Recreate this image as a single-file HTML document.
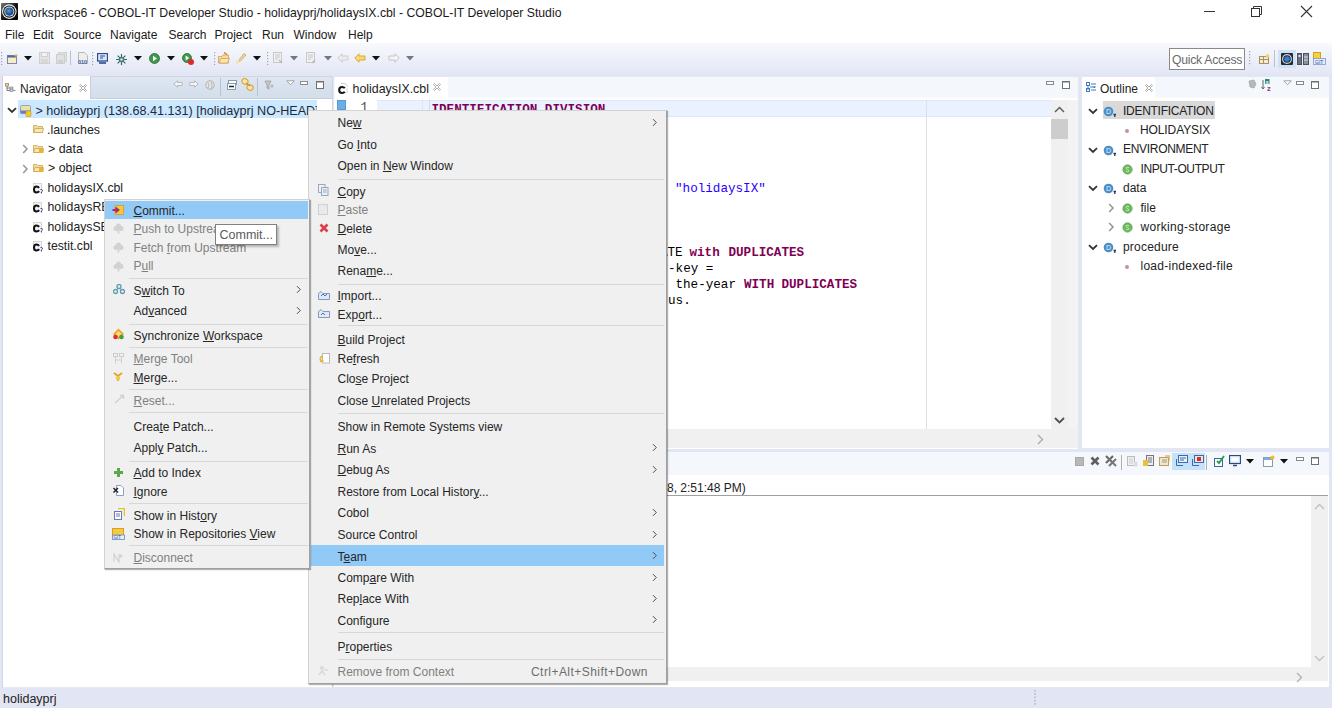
<!DOCTYPE html><html><head><meta charset="utf-8"><style>
html,body{margin:0;padding:0;width:1332px;height:708px;overflow:hidden;background:#e2e5f3}
body>div,body>svg{position:absolute}
.t{white-space:pre;line-height:1}
u{text-decoration:underline;text-underline-offset:1px;text-decoration-thickness:1px}
</style></head><body>
<div style="left:0px;top:0px;width:1332px;height:24px;background:#fff"></div>
<svg style="left:1px;top:3px" width="17" height="17" viewBox="0 0 17 17"><defs><radialGradient id="ag" cx="0.45" cy="0.4" r="0.6"><stop offset="0" stop-color="#5a9ad8"/><stop offset="1" stop-color="#0e3a6e"/></radialGradient><linearGradient id="bg0" x1="0" y1="0" x2="1" y2="1"><stop offset="0" stop-color="#7a7a7a"/><stop offset="0.5" stop-color="#151515"/><stop offset="1" stop-color="#000"/></linearGradient></defs><rect x="0" y="0" width="17" height="17" rx="0.8" fill="url(#bg0)"/><circle cx="8.3" cy="8.6" r="7.3" fill="#f0f0f0"/><circle cx="8.3" cy="8.6" r="6.2" fill="#1a1a1a"/><circle cx="8.3" cy="8.6" r="5" fill="#cfe4f5"/><circle cx="8.3" cy="8.6" r="4.1" fill="url(#ag)"/></svg>
<div class="t" style="left:22px;top:6.63px;font-size:12.25px;color:#1a1a1a;font-family:'Liberation Sans',sans-serif;">workspace6 - COBOL-IT Developer Studio - holidayprj/holidaysIX.cbl - COBOL-IT Developer Studio</div>
<div style="left:1204px;top:11px;width:11px;height:1px;background:#333"></div>
<svg style="left:1250px;top:5px" width="14" height="13"><rect x="1.5" y="3.5" width="8" height="8" fill="#fff" stroke="#333"/><path d="M3.5 3.5V1.5H11.5V9.5H9.5" fill="none" stroke="#333"/></svg>
<svg style="left:1300px;top:5px" width="13" height="13"><path d="M1 1L12 12M12 1L1 12" stroke="#333" stroke-width="1.1"/></svg>
<div style="left:0px;top:24px;width:1332px;height:20px;background:#fff"></div>
<div class="t" style="left:5px;top:28.84px;font-size:12px;color:#1a1a1a;font-family:'Liberation Sans',sans-serif;">File</div>
<div class="t" style="left:33px;top:28.84px;font-size:12px;color:#1a1a1a;font-family:'Liberation Sans',sans-serif;">Edit</div>
<div class="t" style="left:63.5px;top:28.84px;font-size:12px;color:#1a1a1a;font-family:'Liberation Sans',sans-serif;">Source</div>
<div class="t" style="left:110px;top:28.84px;font-size:12px;color:#1a1a1a;font-family:'Liberation Sans',sans-serif;">Navigate</div>
<div class="t" style="left:168.5px;top:28.84px;font-size:12px;color:#1a1a1a;font-family:'Liberation Sans',sans-serif;">Search</div>
<div class="t" style="left:214.5px;top:28.84px;font-size:12px;color:#1a1a1a;font-family:'Liberation Sans',sans-serif;">Project</div>
<div class="t" style="left:262px;top:28.84px;font-size:12px;color:#1a1a1a;font-family:'Liberation Sans',sans-serif;">Run</div>
<div class="t" style="left:293.5px;top:28.84px;font-size:12px;color:#1a1a1a;font-family:'Liberation Sans',sans-serif;">Window</div>
<div class="t" style="left:348px;top:28.84px;font-size:12px;color:#1a1a1a;font-family:'Liberation Sans',sans-serif;">Help</div>
<div style="left:0px;top:43px;width:1332px;height:31px;background:linear-gradient(#f8f9fd,#e3e7f5)"></div>
<div style="left:0px;top:74px;width:1332px;height:634px;background:#e2e5f3"></div>
<div style="left:2px;top:76px;width:331px;height:612px;background:#fff;border:1px solid #d2d4de;border-bottom-color:#e8eaf2;box-sizing:border-box"></div>
<div style="left:3px;top:77px;width:329px;height:21px;background:linear-gradient(#dde6f1,#d3deeb)"></div>
<div style="left:3px;top:98px;width:329px;height:1px;background:#c5d0de"></div>
<div style="left:3px;top:76px;width:88px;height:23px;background:#fff;border-right:1px solid #c9cfdb;box-sizing:border-box"></div>
<div class="t" style="left:20px;top:82.84px;font-size:12px;color:#222;font-family:'Liberation Sans',sans-serif;">Navigator</div>
<div style="left:333px;top:76px;width:746px;height:374px;background:#fff;border:1px solid #e4e7f0;box-sizing:border-box"></div>
<div style="left:334px;top:77px;width:744px;height:21px;background:#f4f7fc"></div>
<div style="left:335px;top:77px;width:113px;height:22px;background:#fff"></div>
<div class="t" style="left:352.5px;top:82.70px;font-size:12.4px;color:#222;font-family:'Liberation Sans',sans-serif;">holidaysIX.cbl</div>
<div style="left:1081px;top:76px;width:249px;height:373px;background:#fff;border:1px solid #e4e7f0;box-sizing:border-box"></div>
<div style="left:1082px;top:77px;width:247px;height:21px;background:#f4f7fc"></div>
<div style="left:1082px;top:77px;width:73px;height:22px;background:#fff"></div>
<div class="t" style="left:1100px;top:83.34px;font-size:12px;color:#222;font-family:'Liberation Sans',sans-serif;">Outline</div>
<div style="left:333px;top:451.5px;width:997px;height:236px;background:#fff;border:1px solid #e4e7f0;box-sizing:border-box"></div>
<div style="left:334px;top:452px;width:995px;height:23px;background:#f4f7fc"></div>
<div style="left:334px;top:495px;width:994px;height:1px;background:#a0a0a0"></div>
<div class="t" style="left:667px;top:481.64px;font-size:12px;color:#222;font-family:'Liberation Sans',sans-serif;">8, 2:51:48 PM)</div>
<div class="t" style="left:3px;top:692.72px;font-size:12.5px;color:#222;font-family:'Liberation Sans',sans-serif;">holidayprj</div>
<div style="left:18px;top:100.3px;width:299px;height:18px;background:#cce8ff"></div>
<svg style="left:7px;top:107px" width="10" height="7"><path d="M1 1.2L5 5L9 1.2" fill="none" stroke="#333" stroke-width="1.8"/></svg>
<div style="left:0;top:100px;width:317px;height:20px;overflow:hidden">
<div class="t" style="left:35.5px;top:4.53px;font-size:12.6px;color:#1d2a3a;font-family:'Liberation Sans',sans-serif;position:absolute">&gt; holidayprj (138.68.41.131) [holidayprj NO-HEAD]</div>
</div>
<div class="t" style="left:47px;top:123.50px;font-size:12.4px;color:#222;font-family:'Liberation Sans',sans-serif;">.launches</div>
<svg style="left:22px;top:144px" width="7" height="10"><path d="M1.2 1L5 5L1.2 9" fill="none" stroke="#999" stroke-width="1.6"/></svg>
<div class="t" style="left:48px;top:143.00px;font-size:12.4px;color:#222;font-family:'Liberation Sans',sans-serif;">&gt; data</div>
<svg style="left:22px;top:163.5px" width="7" height="10"><path d="M1.2 1L5 5L1.2 9" fill="none" stroke="#999" stroke-width="1.6"/></svg>
<div class="t" style="left:48px;top:162.10px;font-size:12.4px;color:#222;font-family:'Liberation Sans',sans-serif;">&gt; object</div>
<div class="t" style="left:47.5px;top:181.53px;font-size:12.25px;color:#222;font-family:'Liberation Sans',sans-serif;">holidaysIX.cbl</div>
<div class="t" style="left:47.5px;top:201.23px;font-size:12.25px;color:#222;font-family:'Liberation Sans',sans-serif;">holidaysREL.cbl</div>
<div class="t" style="left:47.5px;top:220.63px;font-size:12.25px;color:#222;font-family:'Liberation Sans',sans-serif;">holidaysSEQ.cbl</div>
<div class="t" style="left:47.5px;top:240.23px;font-size:12.25px;color:#222;font-family:'Liberation Sans',sans-serif;">testit.cbl</div>
<div style="left:377px;top:100px;width:674px;height:17px;background:#e9f2fe;border-top:1px solid #dfe8fa;border-bottom:1px solid #dfe8fa;box-sizing:border-box"></div>
<div style="left:422px;top:99px;width:1px;height:12px;background:#dfe6ef"></div>
<div style="left:429px;top:99px;width:1px;height:12px;background:#d5dde8"></div>
<div style="left:337px;top:100px;width:9px;height:10px;background:#6aaee8;box-shadow:inset 0 0 0 1px #5a9ad0"></div>
<div class="t" style="left:360.5px;top:102.24px;font-size:12.6px;color:#4a4a4a;font-family:'Liberation Mono',monospace;">1</div>
<div style="left:926px;top:100px;width:1px;height:329px;background:#e0e0e0"></div>
<div style="left:1051px;top:100px;width:27px;height:329px;background:#f3f3f3"></div>
<div style="left:1051px;top:100px;width:17px;height:329px;background:#f0f0f0"></div>
<div style="left:1051px;top:119px;width:17px;height:20px;background:#cdcdcd"></div>
<svg style="left:1054px;top:106px" width="11" height="7"><path d="M1 6L5.5 1.5L10 6" fill="none" stroke="#606060" stroke-width="1.5"/></svg>
<svg style="left:1054px;top:417px" width="11" height="7"><path d="M1 1L5.5 5.5L10 1" fill="none" stroke="#505050" stroke-width="1.8"/></svg>
<div style="left:334px;top:429px;width:744px;height:19px;background:#f0f0f0"></div>
<svg style="left:1037px;top:434px" width="7" height="11"><path d="M1 1L5.5 5.5L1 10" fill="none" stroke="#a8a8a8" stroke-width="1.3"/></svg>
<div class="t" style="left:431.5px;top:104.24px;font-size:12.6px;color:#7f0055;font-family:'Liberation Mono',monospace;font-weight:bold;">IDENTIFICATION DIVISION</div>
<div class="t" style="left:667.5px;top:183.24px;font-size:12.6px;color:#2a00ff;font-family:'Liberation Mono',monospace;">&nbsp;"holidaysIX"</div>
<div class="t" style="left:660px;top:247.24px;font-size:12.6px;color:#000;font-family:'Liberation Mono',monospace;">ATE </div>
<div class="t" style="left:689.5px;top:247.24px;font-size:12.6px;color:#7f0055;font-family:'Liberation Mono',monospace;font-weight:bold;">with</div>
<div class="t" style="left:728.5px;top:247.24px;font-size:12.6px;color:#7f0055;font-family:'Liberation Mono',monospace;font-weight:bold;">DUPLICATES</div>
<div class="t" style="left:660.5px;top:263.24px;font-size:12.6px;color:#000;font-family:'Liberation Mono',monospace;">r-key =</div>
<div class="t" style="left:675.5px;top:279.24px;font-size:12.6px;color:#000;font-family:'Liberation Mono',monospace;">the-year</div>
<div class="t" style="left:744px;top:279.24px;font-size:12.6px;color:#7f0055;font-family:'Liberation Mono',monospace;font-weight:bold;">WITH</div>
<div class="t" style="left:781.5px;top:279.24px;font-size:12.6px;color:#7f0055;font-family:'Liberation Mono',monospace;font-weight:bold;">DUPLICATES</div>
<div class="t" style="left:660.5px;top:295.24px;font-size:12.6px;color:#000;font-family:'Liberation Mono',monospace;">tus.</div>
<div style="left:1103px;top:101px;width:112px;height:18px;background:#d9d9d9"></div>
<svg style="left:1088px;top:108.2px" width="10" height="7"><path d="M1 1.2L5 5L9 1.2" fill="none" stroke="#333" stroke-width="1.8"/></svg>
<svg style="left:1103px;top:106.2px" width="15" height="12"><circle cx="5.5" cy="5.5" r="4.8" fill="#4a8ec6"/><text x="5.5" y="8" font-size="7" font-family="Liberation Sans" fill="#e8f2fa" text-anchor="middle">D</text><path d="M10.5 8.5H13M11.8 8.5V11" stroke="#1a3a6a" stroke-width="1.3"/></svg>
<div class="t" style="left:1123px;top:105.04px;font-size:12px;color:#222;font-family:'Liberation Sans',sans-serif;letter-spacing:-0.28px">IDENTIFICATION</div>
<div style="left:1125px;top:129.2px;width:4px;height:4px;background:#c4909a;border-radius:2px"></div>
<div class="t" style="left:1140px;top:124.04px;font-size:12px;color:#222;font-family:'Liberation Sans',sans-serif;letter-spacing:-0.1px">HOLIDAYSIX</div>
<svg style="left:1088px;top:146.5px" width="10" height="7"><path d="M1 1.2L5 5L9 1.2" fill="none" stroke="#333" stroke-width="1.8"/></svg>
<svg style="left:1103px;top:144.5px" width="15" height="12"><circle cx="5.5" cy="5.5" r="4.8" fill="#4a8ec6"/><text x="5.5" y="8" font-size="7" font-family="Liberation Sans" fill="#e8f2fa" text-anchor="middle">D</text><path d="M10.5 8.5H13M11.8 8.5V11" stroke="#1a3a6a" stroke-width="1.3"/></svg>
<div class="t" style="left:1123px;top:143.34px;font-size:12px;color:#222;font-family:'Liberation Sans',sans-serif;letter-spacing:-0.3px">ENVIRONMENT</div>
<svg style="left:1121.5px;top:163.8px" width="11" height="11"><circle cx="5.5" cy="5.5" r="4.7" fill="#6dba5e" stroke="#5aa04c" stroke-width="0.6"/><path d="M7 3.8Q5.5 2.8 4.3 3.6Q3.6 4.6 5.5 5.5Q7.4 6.4 6.7 7.4Q5.5 8.2 4 7.2" fill="none" stroke="#c8ecc0" stroke-width="1"/></svg>
<div class="t" style="left:1140.5px;top:162.64px;font-size:12px;color:#222;font-family:'Liberation Sans',sans-serif;letter-spacing:-0.4px">INPUT-OUTPUT</div>
<svg style="left:1088px;top:185.4px" width="10" height="7"><path d="M1 1.2L5 5L9 1.2" fill="none" stroke="#333" stroke-width="1.8"/></svg>
<svg style="left:1103px;top:183.4px" width="15" height="12"><circle cx="5.5" cy="5.5" r="4.8" fill="#4a8ec6"/><text x="5.5" y="8" font-size="7" font-family="Liberation Sans" fill="#e8f2fa" text-anchor="middle">D</text><path d="M10.5 8.5H13M11.8 8.5V11" stroke="#1a3a6a" stroke-width="1.3"/></svg>
<div class="t" style="left:1123px;top:182.24px;font-size:12px;color:#222;font-family:'Liberation Sans',sans-serif;letter-spacing:0px">data</div>
<svg style="left:1108px;top:202.8px" width="7" height="10"><path d="M1.2 1L5 5L1.2 9" fill="none" stroke="#999" stroke-width="1.6"/></svg>
<svg style="left:1121.5px;top:202.8px" width="11" height="11"><circle cx="5.5" cy="5.5" r="4.7" fill="#6dba5e" stroke="#5aa04c" stroke-width="0.6"/><path d="M7 3.8Q5.5 2.8 4.3 3.6Q3.6 4.6 5.5 5.5Q7.4 6.4 6.7 7.4Q5.5 8.2 4 7.2" fill="none" stroke="#c8ecc0" stroke-width="1"/></svg>
<div class="t" style="left:1140.5px;top:201.64px;font-size:12px;color:#222;font-family:'Liberation Sans',sans-serif;letter-spacing:0px">file</div>
<svg style="left:1108px;top:222.3px" width="7" height="10"><path d="M1.2 1L5 5L1.2 9" fill="none" stroke="#999" stroke-width="1.6"/></svg>
<svg style="left:1121.5px;top:222.3px" width="11" height="11"><circle cx="5.5" cy="5.5" r="4.7" fill="#6dba5e" stroke="#5aa04c" stroke-width="0.6"/><path d="M7 3.8Q5.5 2.8 4.3 3.6Q3.6 4.6 5.5 5.5Q7.4 6.4 6.7 7.4Q5.5 8.2 4 7.2" fill="none" stroke="#c8ecc0" stroke-width="1"/></svg>
<div class="t" style="left:1140.5px;top:221.14px;font-size:12px;color:#222;font-family:'Liberation Sans',sans-serif;letter-spacing:0.32px">working-storage</div>
<svg style="left:1088px;top:243.8px" width="10" height="7"><path d="M1 1.2L5 5L9 1.2" fill="none" stroke="#333" stroke-width="1.8"/></svg>
<svg style="left:1103px;top:241.8px" width="15" height="12"><circle cx="5.5" cy="5.5" r="4.8" fill="#4a8ec6"/><text x="5.5" y="8" font-size="7" font-family="Liberation Sans" fill="#e8f2fa" text-anchor="middle">D</text><path d="M10.5 8.5H13M11.8 8.5V11" stroke="#1a3a6a" stroke-width="1.3"/></svg>
<div class="t" style="left:1123px;top:240.64px;font-size:12px;color:#222;font-family:'Liberation Sans',sans-serif;letter-spacing:0.2px">procedure</div>
<div style="left:1125px;top:265.2px;width:4px;height:4px;background:#c4909a;border-radius:2px"></div>
<div class="t" style="left:1140.5px;top:260.04px;font-size:12px;color:#222;font-family:'Liberation Sans',sans-serif;letter-spacing:0.26px">load-indexed-file</div>
<div style="left:1311px;top:496px;width:17px;height:172px;background:#f0f0f0"></div>
<div style="left:334px;top:667px;width:977px;height:14px;background:#f0f0f0"></div>
<div style="left:1311px;top:667px;width:17px;height:14px;background:#f0f0f0"></div>
<svg style="left:1314px;top:503px" width="11" height="7"><path d="M1 6L5.5 1.5L10 6" fill="none" stroke="#c0c0c0" stroke-width="1.3"/></svg>
<svg style="left:1314px;top:655px" width="11" height="7"><path d="M1 1L5.5 5.5L10 1" fill="none" stroke="#c0c0c0" stroke-width="1.3"/></svg>
<svg style="left:1296px;top:672px" width="7" height="11"><path d="M1 1L5.5 5.5L1 10" fill="none" stroke="#b0b0b0" stroke-width="1.3"/></svg>
<svg style="left:5px;top:83px" width="11" height="9" viewBox="0 0 11 9"><rect x="0.5" y="0.5" width="3" height="2.5" fill="#e8dcb0" stroke="#9c8a50" stroke-width="0.8"/><path d="M2 3V7.5H5M2 5H5" stroke="#6a6a6a" stroke-width="0.9" fill="none"/><rect x="5" y="4" width="3" height="2" fill="#d0d8e0" stroke="#7a8a9a" stroke-width="0.7"/><rect x="5" y="6.5" width="3" height="2" fill="#d0d8e0" stroke="#7a8a9a" stroke-width="0.7"/><path d="M8.5 7.5H10.5" stroke="#888"/></svg>
<svg style="left:79px;top:84px" width="8" height="8" viewBox="0 0 8 8"><path d="M1.5 0.5L4 3L6.5 0.5L7.5 1.5L5 4L7.5 6.5L6.5 7.5L4 5L1.5 7.5L0.5 6.5L3 4L0.5 1.5z" fill="#fff" stroke="#9a9a9a" stroke-width="0.8"/></svg>
<svg style="left:173px;top:80px" width="10" height="8" viewBox="0 0 10 8"><path d="M0.8 4L4.5 0.8V2.5H9.2V5.5H4.5V7.2z" fill="#f4f4f4" stroke="#b5b5b5" stroke-width="0.9"/></svg>
<svg style="left:189px;top:80px" width="10" height="8" viewBox="0 0 10 8"><path d="M9.2 4L5.5 0.8V2.5H0.8V5.5H5.5V7.2z" fill="#f4f4f4" stroke="#b5b5b5" stroke-width="0.9"/></svg>
<svg style="left:205px;top:80px" width="10" height="10" viewBox="0 0 10 10"><circle cx="5" cy="5" r="4.2" fill="#e6e6e6" stroke="#b0b0b0"/><path d="M3 2.5Q5 5 3 8M6 2Q8 5 6.5 8.5" stroke="#a8a8a8" fill="none" stroke-width="0.8"/></svg>
<div style="left:220px;top:78px;width:1px;height:18px;background:#b7c3d2"></div>
<svg style="left:227px;top:80px" width="10" height="10" viewBox="0 0 10 10"><rect x="1.5" y="0.5" width="8" height="4" fill="#fff" stroke="#8a9ab0"/><rect x="0.5" y="3.5" width="8" height="6" fill="#fff" stroke="#8a9ab0"/><path d="M2 6.5H7" stroke="#222" stroke-width="1.5"/></svg>
<svg style="left:241px;top:78px" width="14" height="14" viewBox="0 0 14 14"><rect x="1" y="1" width="6" height="5" rx="2" fill="#fbe9a8" stroke="#d9a53a" stroke-width="1.2" transform="rotate(30 4 3.5)"/><rect x="6" y="7" width="6" height="5" rx="2" fill="#fbe9a8" stroke="#d9a53a" stroke-width="1.2" transform="rotate(30 9 9.5)"/><path d="M5 5L9 8" stroke="#c89030" stroke-width="1.2"/></svg>
<div style="left:257px;top:78px;width:1px;height:18px;background:#b7c3d2"></div>
<svg style="left:264px;top:80px" width="10" height="10" viewBox="0 0 10 10"><path d="M1 1L7 1L5 5V9L3 8V5z" fill="#c6c6c6" stroke="#9a9a9a" stroke-width="0.7"/><circle cx="8" cy="6" r="1.5" fill="#b8b8b8"/></svg>
<svg style="left:286px;top:80px" width="9" height="6" viewBox="0 0 9 6"><path d="M0.8 0.8H8.2L4.5 4.8z" fill="#fff" stroke="#9a9a9a" stroke-width="0.9"/></svg>
<svg style="left:300px;top:81px" width="8" height="4" viewBox="0 0 8 4"><rect x="0.5" y="0.5" width="7" height="3" fill="#fff" stroke="#8a8a8a"/></svg>
<svg style="left:316px;top:81px" width="8" height="8" viewBox="0 0 8 8"><rect x="0.5" y="0.5" width="7" height="7" fill="#fff" stroke="#707070"/><rect x="0" y="0" width="8" height="1.5" fill="#707070"/></svg>
<svg style="left:337px;top:82px" width="12" height="13" viewBox="0 0 12 13"><path d="M4 1.5Q9 0.5 10.5 4.5" fill="none" stroke="#c8c8c8" stroke-width="1"/><path d="M10 5.5V11" stroke="#d8d8d8" stroke-width="1"/><path d="M7.8 6.3Q7 5 5 5Q2.2 5 2.2 8Q2.2 11 5 11Q7 11 7.8 9.7" fill="none" stroke="#151515" stroke-width="2.1"/></svg>
<svg style="left:433px;top:83px" width="8" height="8" viewBox="0 0 8 8"><path d="M1.5 0.5L4 3L6.5 0.5L7.5 1.5L5 4L7.5 6.5L6.5 7.5L4 5L1.5 7.5L0.5 6.5L3 4L0.5 1.5z" fill="#fff" stroke="#9a9a9a" stroke-width="0.8"/></svg>
<svg style="left:1046px;top:81px" width="8" height="4" viewBox="0 0 8 4"><rect x="0.5" y="0.5" width="7" height="3" fill="#fff" stroke="#8a8a8a"/></svg>
<svg style="left:1062px;top:81px" width="8" height="8" viewBox="0 0 8 8"><rect x="0.5" y="0.5" width="7" height="7" fill="#fff" stroke="#707070"/><rect x="0" y="0" width="8" height="1.5" fill="#707070"/></svg>
<svg style="left:1086px;top:82px" width="11" height="11" viewBox="0 0 11 11"><rect x="0.5" y="0.5" width="3" height="3" fill="#fff" stroke="#3d7cc0"/><rect x="0.5" y="6.5" width="3" height="3" fill="#fff" stroke="#3d7cc0"/><path d="M2 3.5V8M5 2H10M5 5H8M5 8H10M4 5H5" stroke="#3d7cc0" stroke-width="1"/><circle cx="8.5" cy="5" r="1.1" fill="#3d7cc0"/></svg>
<svg style="left:1145px;top:84px" width="8" height="8" viewBox="0 0 8 8"><path d="M1.5 0.5L4 3L6.5 0.5L7.5 1.5L5 4L7.5 6.5L6.5 7.5L4 5L1.5 7.5L0.5 6.5L3 4L0.5 1.5z" fill="#fff" stroke="#9a9a9a" stroke-width="0.8"/></svg>
<svg style="left:1248px;top:79px" width="10" height="10" viewBox="0 0 10 10"><path d="M1 2L6 1L8 5L6 9L2 8z" fill="#b8b8b8" stroke="#999" stroke-width="0.6"/></svg>
<svg style="left:1261px;top:79px" width="13" height="13" viewBox="0 0 13 13"><path d="M2 1V9.5M0.5 8L2 10L3.5 8" stroke="#666" fill="none" stroke-width="1"/><rect x="4" y="0" width="4.5" height="5" fill="#2a8a7a"/><text x="4.5" y="4.5" font-size="5.5" font-family="Liberation Sans" fill="#fff">a</text><text x="6" y="11.5" font-size="7.5" font-family="Liberation Sans" font-weight="bold" fill="#8a3a8a">z</text></svg>
<svg style="left:1283px;top:80px" width="9" height="6" viewBox="0 0 9 6"><path d="M0.8 0.8H8.2L4.5 4.8z" fill="#fff" stroke="#9a9a9a" stroke-width="0.9"/></svg>
<svg style="left:1296px;top:81px" width="8" height="4" viewBox="0 0 8 4"><rect x="0.5" y="0.5" width="7" height="3" fill="#fff" stroke="#8a8a8a"/></svg>
<svg style="left:1311px;top:81px" width="8" height="8" viewBox="0 0 8 8"><rect x="0.5" y="0.5" width="7" height="7" fill="#fff" stroke="#707070"/><rect x="0" y="0" width="8" height="1.5" fill="#707070"/></svg>
<svg style="left:1075px;top:457px" width="9" height="9" viewBox="0 0 9 9"><rect x="0.5" y="0.5" width="8" height="8" fill="#b8b8b8" stroke="#a8a8a8"/></svg>
<svg style="left:1090px;top:456px" width="10" height="10" viewBox="0 0 10 10"><path d="M1.5 1.5L8.5 8.5M8.5 1.5L1.5 8.5" stroke="#5e5e5e" stroke-width="2.6"/></svg>
<svg style="left:1105px;top:455px" width="12" height="12" viewBox="0 0 12 12"><path d="M1 1L8 8M8 1L1 8" stroke="#666" stroke-width="2"/><path d="M4 4L11 11M11 4L4 11" stroke="#777" stroke-width="2"/></svg>
<div style="left:1121px;top:455px;width:1px;height:15px;background:#b0b0b0"></div>
<svg style="left:1127px;top:456px" width="11" height="11" viewBox="0 0 11 11"><rect x="0.5" y="0.5" width="7" height="9" fill="#f0f0f0" stroke="#bbb"/><path d="M2 3H6M2 5H6M2 7H6" stroke="#ccc"/><rect x="7" y="6" width="3.5" height="4.5" fill="#ddd"/></svg>
<svg style="left:1143px;top:455px" width="11" height="12" viewBox="0 0 11 12"><rect x="3.5" y="0.5" width="7" height="10" fill="#eee" stroke="#777"/><rect x="0" y="5" width="5" height="6" fill="#e8c040"/><path d="M5 3H9M5 5H9M5 7H9" stroke="#777"/></svg>
<svg style="left:1159px;top:455px" width="11" height="12" viewBox="0 0 11 12"><rect x="0.5" y="2.5" width="9" height="8" fill="#f5e8c0" stroke="#bba060"/><path d="M3 5H8M3 7H8" stroke="#999"/><path d="M6 1H11V6" fill="none" stroke="#e0a020"/></svg>
<div style="left:1172px;top:453px;width:33px;height:17px;background:#c6e1fa"></div>
<svg style="left:1176px;top:455px" width="12" height="12" viewBox="0 0 12 12"><rect x="2.5" y="0.5" width="9" height="7" fill="#e8f0fa" stroke="#3a6ab0"/><path d="M4 3H10M4 5H8" stroke="#3a6ab0"/><path d="M0.5 4V10.5H7" fill="none" stroke="#3a6ab0"/></svg>
<svg style="left:1192px;top:455px" width="12" height="12" viewBox="0 0 12 12"><rect x="2.5" y="0.5" width="9" height="7" fill="#f8e0e0" stroke="#3a6ab0"/><rect x="5" y="2" width="4" height="4" fill="#d03030"/><path d="M0.5 4V10.5H7" fill="none" stroke="#3a6ab0"/></svg>
<div style="left:1206px;top:455px;width:1px;height:15px;background:#b0b0b0"></div>
<svg style="left:1214px;top:455px" width="11" height="12" viewBox="0 0 11 12"><rect x="0.5" y="3.5" width="8" height="8" fill="#fff" stroke="#3a6a9a"/><path d="M3 6L5 8L10 1" stroke="#2a9a50" stroke-width="1.8" fill="none"/></svg>
<svg style="left:1229px;top:455px" width="12" height="12" viewBox="0 0 12 12"><rect x="0.5" y="0.5" width="11" height="8" fill="#e0ecf8" stroke="#2a4a80" stroke-width="1.2"/><rect x="2.5" y="2.5" width="7" height="4" fill="#fff"/><path d="M4 10.5H8" stroke="#2a4a80" stroke-width="1.5"/></svg>
<svg style="left:1246px;top:459px" width="8" height="5" viewBox="0 0 8 5"><path d="M0 0H8L4 4.5z" fill="#111"/></svg>
<svg style="left:1263px;top:455px" width="12" height="12" viewBox="0 0 12 12"><rect x="0.5" y="2.5" width="9" height="9" fill="#fff" stroke="#8a9ab0"/><rect x="1" y="3" width="8" height="2" fill="#7ab0e0"/><circle cx="9.5" cy="2.5" r="2" fill="#f0c020"/></svg>
<svg style="left:1280px;top:459px" width="8" height="5" viewBox="0 0 8 5"><path d="M0 0H8L4 4.5z" fill="#111"/></svg>
<svg style="left:1296px;top:457px" width="8" height="4" viewBox="0 0 8 4"><rect x="0.5" y="0.5" width="7" height="3" fill="#fff" stroke="#8a8a8a"/></svg>
<svg style="left:1311px;top:457px" width="8" height="8" viewBox="0 0 8 8"><rect x="0.5" y="0.5" width="7" height="7" fill="#fff" stroke="#707070"/><rect x="0" y="0" width="8" height="1.5" fill="#707070"/></svg>
<svg style="left:20px;top:104px" width="12" height="13" viewBox="0 0 12 13"><rect x="0.5" y="1.5" width="10" height="8" rx="1" fill="#e9e2a8" stroke="#9aa0b8"/><rect x="0.5" y="6.5" width="10" height="3" fill="#7078c8"/><rect x="6" y="7" width="5" height="5.5" rx="1" fill="#f2cc20" stroke="#c8a010" stroke-width="0.6"/></svg>
<svg style="left:33px;top:124px" width="11" height="10" viewBox="0 0 11 10"><path d="M0.5 1.5H4L5 2.5H9.5V8.5H0.5z" fill="#f3dc9a" stroke="#c9a456" stroke-width="0.8"/><path d="M0.5 8.5L2 4.5H10.5L9.5 8.5z" fill="#f7e7b0" stroke="#c9a456" stroke-width="0.8"/></svg>
<svg style="left:33px;top:144px" width="11" height="10" viewBox="0 0 11 10"><path d="M0.5 1.5H4L5 2.5H9.5V8.5H0.5z" fill="#f3dc9a" stroke="#c9a456" stroke-width="0.8"/><path d="M0.5 8.5L2 4.5H10.5L9.5 8.5z" fill="#f7e7b0" stroke="#c9a456" stroke-width="0.8"/><rect x="6" y="5" width="4.5" height="4" fill="#f0b030"/></svg>
<svg style="left:33px;top:163px" width="11" height="10" viewBox="0 0 11 10"><path d="M0.5 1.5H4L5 2.5H9.5V8.5H0.5z" fill="#f3dc9a" stroke="#c9a456" stroke-width="0.8"/><path d="M0.5 8.5L2 4.5H10.5L9.5 8.5z" fill="#f7e7b0" stroke="#c9a456" stroke-width="0.8"/><rect x="6" y="5" width="4.5" height="4" fill="#f0b030"/></svg>
<svg style="left:32px;top:182.5px" width="12" height="12" viewBox="0 0 12 12"><rect x="1.5" y="0.5" width="8" height="9" fill="#f4f4f4" stroke="#c8c8c8" stroke-width="0.7"/><path d="M7 5Q6.3 3.6 4.5 3.6Q2 3.6 2 6.5Q2 9.4 4.5 9.4Q6.3 9.4 7 8" fill="none" stroke="#111" stroke-width="2"/><path d="M8.5 6.5Q10.5 6 10.5 7.5Q10.5 8.5 9.5 9V10.5" fill="none" stroke="#3050a0" stroke-width="1"/></svg>
<svg style="left:32px;top:202px" width="12" height="12" viewBox="0 0 12 12"><rect x="1.5" y="0.5" width="8" height="9" fill="#f4f4f4" stroke="#c8c8c8" stroke-width="0.7"/><path d="M7 5Q6.3 3.6 4.5 3.6Q2 3.6 2 6.5Q2 9.4 4.5 9.4Q6.3 9.4 7 8" fill="none" stroke="#111" stroke-width="2"/><path d="M8.5 6.5Q10.5 6 10.5 7.5Q10.5 8.5 9.5 9V10.5" fill="none" stroke="#3050a0" stroke-width="1"/></svg>
<svg style="left:32px;top:221.5px" width="12" height="12" viewBox="0 0 12 12"><rect x="1.5" y="0.5" width="8" height="9" fill="#f4f4f4" stroke="#c8c8c8" stroke-width="0.7"/><path d="M7 5Q6.3 3.6 4.5 3.6Q2 3.6 2 6.5Q2 9.4 4.5 9.4Q6.3 9.4 7 8" fill="none" stroke="#111" stroke-width="2"/><path d="M8.5 6.5Q10.5 6 10.5 7.5Q10.5 8.5 9.5 9V10.5" fill="none" stroke="#3050a0" stroke-width="1"/></svg>
<svg style="left:32px;top:241px" width="12" height="12" viewBox="0 0 12 12"><rect x="1.5" y="0.5" width="8" height="9" fill="#f4f4f4" stroke="#c8c8c8" stroke-width="0.7"/><path d="M7 5Q6.3 3.6 4.5 3.6Q2 3.6 2 6.5Q2 9.4 4.5 9.4Q6.3 9.4 7 8" fill="none" stroke="#111" stroke-width="2"/><path d="M8.5 6.5Q10.5 6 10.5 7.5Q10.5 8.5 9.5 9V10.5" fill="none" stroke="#3050a0" stroke-width="1"/></svg>
<svg style="left:1px;top:52px" width="2" height="13" viewBox="0 0 2 13"><rect x="0" y="0" width="1.2" height="1.2" fill="#9aa4b8"/><rect x="0" y="3" width="1.2" height="1.2" fill="#9aa4b8"/><rect x="0" y="6" width="1.2" height="1.2" fill="#9aa4b8"/><rect x="0" y="9" width="1.2" height="1.2" fill="#9aa4b8"/><rect x="0" y="12" width="1.2" height="1.2" fill="#9aa4b8"/></svg>
<svg style="left:7px;top:54px" width="11" height="10" viewBox="0 0 11 10"><rect x="0.5" y="1.5" width="9" height="8" fill="#f8edc0" stroke="#7a8ab0"/><rect x="0.5" y="1.5" width="9" height="2" fill="#4a6aa8"/><path d="M9 0V3M7.5 1.5H10.5" stroke="#f0b020" stroke-width="1.2"/></svg>
<svg style="left:24px;top:56px" width="8" height="5" viewBox="0 0 8 5"><path d="M0 0H8L4 4.5z" fill="#111"/></svg>
<svg style="left:39px;top:52px" width="11" height="12" viewBox="0 0 11 12"><rect x="0.5" y="0.5" width="10" height="11" fill="#e4e4e4" stroke="#cfcfcf"/><rect x="2.5" y="0.5" width="6" height="4" fill="#f2f2f2" stroke="#d0d0d0"/><rect x="2" y="7" width="7" height="4" fill="#d8d8d8"/></svg>
<svg style="left:56px;top:52px" width="11" height="12" viewBox="0 0 11 12"><rect x="2.5" y="0.5" width="8" height="9" fill="#e4e4e4" stroke="#d0d0d0"/><rect x="0.5" y="2.5" width="8" height="9" fill="#e0e0e0" stroke="#cdcdcd"/><rect x="2" y="8" width="5" height="3" fill="#d0d0d0"/></svg>
<div style="left:70px;top:51px;width:1px;height:14px;background:#b8c0cc"></div>
<svg style="left:78px;top:52px" width="10" height="12" viewBox="0 0 10 12"><path d="M0.5 0.5H6.5L9.5 3.5V11.5H0.5z" fill="#eeeeee" stroke="#b8b8b8"/><text x="0" y="11.5" font-size="5.5" font-family="Liberation Sans" font-weight="bold" fill="#3a5aa0">010</text></svg>
<svg style="left:92px;top:52px" width="2" height="13" viewBox="0 0 2 13"><rect x="0" y="0" width="1.2" height="1.2" fill="#9aa4b8"/><rect x="0" y="3" width="1.2" height="1.2" fill="#9aa4b8"/><rect x="0" y="6" width="1.2" height="1.2" fill="#9aa4b8"/><rect x="0" y="9" width="1.2" height="1.2" fill="#9aa4b8"/><rect x="0" y="12" width="1.2" height="1.2" fill="#9aa4b8"/></svg>
<svg style="left:97px;top:53px" width="11" height="11" viewBox="0 0 11 11"><rect x="0.5" y="0.5" width="10" height="7.5" fill="#dce8f8" stroke="#2a4a90" stroke-width="1.3"/><path d="M3 3H8M3 5H6" stroke="#2a4a90"/><path d="M2 10H9" stroke="#2a4a90" stroke-width="1.6"/></svg>
<svg style="left:116px;top:54px" width="11" height="11" viewBox="0 0 11 11"><path d="M5.5 0V11M0 5.5H11M1.6 1.6L9.4 9.4M9.4 1.6L1.6 9.4" stroke="#3a6a6a" stroke-width="1.2"/><circle cx="5.5" cy="5.5" r="2.8" fill="#4a7a7a"/><circle cx="5.5" cy="5.5" r="1.3" fill="#cfe0e0"/></svg>
<svg style="left:133.5px;top:56px" width="8" height="5" viewBox="0 0 8 5"><path d="M0 0H8L4 4.5z" fill="#111"/></svg>
<svg style="left:149px;top:53px" width="11" height="11" viewBox="0 0 11 11"><circle cx="5.5" cy="5.5" r="5" fill="#3d9a48" stroke="#2a6a30" stroke-width="0.8"/><path d="M4 2.8V8.2L8 5.5z" fill="#fff"/></svg>
<svg style="left:167px;top:56px" width="8" height="5" viewBox="0 0 8 5"><path d="M0 0H8L4 4.5z" fill="#111"/></svg>
<svg style="left:182px;top:53px" width="13" height="12" viewBox="0 0 13 12"><circle cx="5" cy="5" r="4.5" fill="#3d9a48" stroke="#2a6a30" stroke-width="0.8"/><path d="M3.6 2.6V7.4L7.2 5z" fill="#fff"/><circle cx="9" cy="9" r="3" fill="#e02828"/></svg>
<svg style="left:200px;top:56px" width="8" height="5" viewBox="0 0 8 5"><path d="M0 0H8L4 4.5z" fill="#111"/></svg>
<svg style="left:214px;top:52px" width="2" height="13" viewBox="0 0 2 13"><rect x="0" y="0" width="1.2" height="1.2" fill="#9aa4b8"/><rect x="0" y="3" width="1.2" height="1.2" fill="#9aa4b8"/><rect x="0" y="6" width="1.2" height="1.2" fill="#9aa4b8"/><rect x="0" y="9" width="1.2" height="1.2" fill="#9aa4b8"/><rect x="0" y="12" width="1.2" height="1.2" fill="#9aa4b8"/></svg>
<svg style="left:218px;top:52px" width="12" height="12" viewBox="0 0 12 12"><path d="M0.5 4.5H4L5 3H10.5V11H0.5z" fill="#f6dc98" stroke="#d0a050" stroke-width="0.8"/><path d="M1 11L3 6.5H11.5L9.5 11z" fill="#f8e6b8" stroke="#d0a050" stroke-width="0.8"/><path d="M6 0.5L9 2.5" stroke="#e07020" stroke-width="1.3"/></svg>
<svg style="left:235px;top:52px" width="12" height="12" viewBox="0 0 12 12"><path d="M1 11L4 8L9 1.5L11 3L5 9.5z" fill="#f0d49a" stroke="#d0a060" stroke-width="0.8"/><circle cx="2.5" cy="9.5" r="1.8" fill="#f4e8b8"/></svg>
<svg style="left:253px;top:56px" width="8" height="5" viewBox="0 0 8 5"><path d="M0 0H8L4 4.5z" fill="#111"/></svg>
<svg style="left:267px;top:52px" width="2" height="13" viewBox="0 0 2 13"><rect x="0" y="0" width="1.2" height="1.2" fill="#9aa4b8"/><rect x="0" y="3" width="1.2" height="1.2" fill="#9aa4b8"/><rect x="0" y="6" width="1.2" height="1.2" fill="#9aa4b8"/><rect x="0" y="9" width="1.2" height="1.2" fill="#9aa4b8"/><rect x="0" y="12" width="1.2" height="1.2" fill="#9aa4b8"/></svg>
<svg style="left:273px;top:52px" width="10" height="12" viewBox="0 0 10 12"><rect x="0.5" y="0.5" width="8" height="10" fill="#f0f0f0" stroke="#c8c8c8"/><path d="M2 3H7M2 5H7M2 7H5" stroke="#c8c8c8"/><path d="M6 8L9 11" stroke="#b8b8b8" stroke-width="1.2"/></svg>
<svg style="left:289.5px;top:56px" width="8" height="5" viewBox="0 0 8 5"><path d="M0 0H8L4 4.5z" fill="#707880"/></svg>
<svg style="left:306px;top:52px" width="10" height="12" viewBox="0 0 10 12"><rect x="0.5" y="0.5" width="8" height="10" fill="#f0f0f0" stroke="#c8c8c8"/><path d="M2 3H7M2 5H7M2 7H5" stroke="#c8c8c8"/><path d="M6 11L9 8" stroke="#b8b8b8" stroke-width="1.2"/></svg>
<svg style="left:323.5px;top:56px" width="8" height="5" viewBox="0 0 8 5"><path d="M0 0H8L4 4.5z" fill="#707880"/></svg>
<svg style="left:337px;top:53px" width="12" height="10" viewBox="0 0 12 10"><path d="M0.8 5L5 0.8V3H11V7H5V9.2z" fill="#ececec" stroke="#cccccc" stroke-width="0.9"/></svg>
<svg style="left:354px;top:53px" width="12" height="10" viewBox="0 0 12 10"><path d="M0.8 5L5 0.8V3H11V7H5V9.2z" fill="#f8d878" stroke="#e0a828" stroke-width="1"/></svg>
<svg style="left:372px;top:56px" width="8" height="5" viewBox="0 0 8 5"><path d="M0 0H8L4 4.5z" fill="#111"/></svg>
<svg style="left:388px;top:53px" width="12" height="10" viewBox="0 0 12 10"><path d="M11.2 5L7 0.8V3H1V7H7V9.2z" fill="#f4f4f4" stroke="#c0c0c0" stroke-width="0.9"/></svg>
<svg style="left:405.5px;top:56px" width="8" height="5" viewBox="0 0 8 5"><path d="M0 0H8L4 4.5z" fill="#707880"/></svg>
<div style="left:1169px;top:48px;width:76px;height:22px;background:#fff;border:1px solid #8a8a8a;box-sizing:border-box"></div>
<div class="t" style="left:1172px;top:53.67px;font-size:12.2px;color:#6a6a6a;font-family:'Liberation Sans',sans-serif;letter-spacing:-0.25px">Quick Access</div>
<svg style="left:1249px;top:51px" width="2" height="15" viewBox="0 0 2 15"><rect x="0" y="0" width="1.2" height="1.2" fill="#9aa4b8"/><rect x="0" y="3" width="1.2" height="1.2" fill="#9aa4b8"/><rect x="0" y="6" width="1.2" height="1.2" fill="#9aa4b8"/><rect x="0" y="9" width="1.2" height="1.2" fill="#9aa4b8"/><rect x="0" y="12" width="1.2" height="1.2" fill="#9aa4b8"/></svg>
<svg style="left:1259px;top:54px" width="11" height="10" viewBox="0 0 11 10"><rect x="0.5" y="2.5" width="9" height="7" fill="#f4ecd4" stroke="#a89060"/><path d="M0.5 5.5H9.5M4.5 2.5V9.5" stroke="#a89060"/><circle cx="8.5" cy="2" r="1.8" fill="#f0d060"/></svg>
<div style="left:1274px;top:50px;width:1px;height:17px;background:#b8c0cc"></div>
<div style="left:1278px;top:50px;width:18px;height:18px;background:#cfe3f7"></div>
<svg style="left:1281px;top:53px" width="12" height="12" viewBox="0 0 12 12"><rect x="0" y="0" width="12" height="12" rx="1" fill="#2a2a2a"/><circle cx="6" cy="6" r="5" fill="#c8d4e0"/><circle cx="6" cy="6" r="3.8" fill="#1a2a3a"/><circle cx="6" cy="6" r="2.8" fill="#3a7ac8"/></svg>
<svg style="left:1297px;top:53px" width="12" height="12" viewBox="0 0 12 12"><rect x="0.5" y="0.5" width="4" height="11" fill="#6a7080" stroke="#4a5060"/><rect x="6.5" y="0.5" width="5" height="11" fill="#8a909a" stroke="#4a5060"/><path d="M7 4H11M7 7H11" stroke="#dde"/><rect x="1.5" y="2" width="2" height="2" fill="#dde"/></svg>
<svg style="left:1313px;top:52px" width="13" height="13" viewBox="0 0 13 13"><rect x="0.5" y="0.5" width="7" height="7" fill="#f5d040" stroke="#d0a020"/><rect x="0.5" y="6.5" width="12" height="6" fill="#e4ecf8" stroke="#7a9ad0" stroke-width="0.8"/><text x="2" y="12" font-size="5" font-family="Liberation Sans" fill="#3050a0">GIT</text></svg>
<div style="left:308px;top:110px;width:359px;height:574px;background:#f0f0f0;border:1px solid #a0a0a0;border-top-color:#d2d2d2;border-left-color:#d2d2d2;box-sizing:border-box;box-shadow:1px 1px 1px rgba(0,0,0,0.3)"></div>
<div style="left:311px;top:545px;width:353px;height:21px;background:#91c9f7"></div>
<div class="t" style="left:337.5px;top:117.24px;font-size:12px;color:#262626;font-family:'Liberation Sans',sans-serif;">Ne<u>w</u></div>
<svg style="left:652px;top:117.9px" width="6" height="9"><path d="M1 1.2L4.3 4.5L1 7.8" fill="none" stroke="#4a4a4a" stroke-width="1"/></svg>
<div class="t" style="left:337.5px;top:138.54px;font-size:12px;color:#262626;font-family:'Liberation Sans',sans-serif;">Go <u>I</u>nto</div>
<div class="t" style="left:337.5px;top:160.24px;font-size:12px;color:#262626;font-family:'Liberation Sans',sans-serif;">Open in <u>N</u>ew Window</div>
<div style="left:338px;top:179px;width:326px;height:1px;background:#d7d7d7"></div>
<div class="t" style="left:337.5px;top:185.84px;font-size:12px;color:#262626;font-family:'Liberation Sans',sans-serif;"><u>C</u>opy</div>
<div class="t" style="left:337.5px;top:204.24px;font-size:12px;color:#808080;font-family:'Liberation Sans',sans-serif;"><u>P</u>aste</div>
<div class="t" style="left:337.5px;top:222.84px;font-size:12px;color:#262626;font-family:'Liberation Sans',sans-serif;"><u>D</u>elete</div>
<div class="t" style="left:337.5px;top:243.64px;font-size:12px;color:#262626;font-family:'Liberation Sans',sans-serif;">Mo<u>v</u>e...</div>
<div class="t" style="left:337.5px;top:264.84px;font-size:12px;color:#262626;font-family:'Liberation Sans',sans-serif;">Rena<u>m</u>e...</div>
<div style="left:338px;top:284px;width:326px;height:1px;background:#d7d7d7"></div>
<div class="t" style="left:337.5px;top:290.24px;font-size:12px;color:#262626;font-family:'Liberation Sans',sans-serif;"><u>I</u>mport...</div>
<div class="t" style="left:337.5px;top:308.54px;font-size:12px;color:#262626;font-family:'Liberation Sans',sans-serif;">Exp<u>o</u>rt...</div>
<div style="left:338px;top:325px;width:326px;height:1px;background:#d7d7d7"></div>
<div class="t" style="left:337.5px;top:334.04px;font-size:12px;color:#262626;font-family:'Liberation Sans',sans-serif;"><u>B</u>uild Project</div>
<div class="t" style="left:337.5px;top:353.14px;font-size:12px;color:#262626;font-family:'Liberation Sans',sans-serif;">Re<u>f</u>resh</div>
<div class="t" style="left:337.5px;top:373.44px;font-size:12px;color:#262626;font-family:'Liberation Sans',sans-serif;">Clo<u>s</u>e Project</div>
<div class="t" style="left:337.5px;top:394.54px;font-size:12px;color:#262626;font-family:'Liberation Sans',sans-serif;">Close <u>U</u>nrelated Projects</div>
<div style="left:338px;top:413px;width:326px;height:1px;background:#d7d7d7"></div>
<div class="t" style="left:337.5px;top:421.34px;font-size:12px;color:#262626;font-family:'Liberation Sans',sans-serif;">Show in Remote Systems view</div>
<div class="t" style="left:337.5px;top:442.54px;font-size:12px;color:#262626;font-family:'Liberation Sans',sans-serif;"><u>R</u>un As</div>
<svg style="left:652px;top:443.2px" width="6" height="9"><path d="M1 1.2L4.3 4.5L1 7.8" fill="none" stroke="#4a4a4a" stroke-width="1"/></svg>
<div class="t" style="left:337.5px;top:464.14px;font-size:12px;color:#262626;font-family:'Liberation Sans',sans-serif;"><u>D</u>ebug As</div>
<svg style="left:652px;top:464.8px" width="6" height="9"><path d="M1 1.2L4.3 4.5L1 7.8" fill="none" stroke="#4a4a4a" stroke-width="1"/></svg>
<div class="t" style="left:337.5px;top:485.84px;font-size:12px;color:#262626;font-family:'Liberation Sans',sans-serif;">Restore from Local Histor<u>y</u>...</div>
<div class="t" style="left:337.5px;top:507.44px;font-size:12px;color:#262626;font-family:'Liberation Sans',sans-serif;">Cobol</div>
<svg style="left:652px;top:508.1px" width="6" height="9"><path d="M1 1.2L4.3 4.5L1 7.8" fill="none" stroke="#4a4a4a" stroke-width="1"/></svg>
<div class="t" style="left:337.5px;top:529.04px;font-size:12px;color:#262626;font-family:'Liberation Sans',sans-serif;">Source Control</div>
<svg style="left:652px;top:529.7px" width="6" height="9"><path d="M1 1.2L4.3 4.5L1 7.8" fill="none" stroke="#4a4a4a" stroke-width="1"/></svg>
<div class="t" style="left:337.5px;top:550.64px;font-size:12px;color:#262626;font-family:'Liberation Sans',sans-serif;">T<u>e</u>am</div>
<svg style="left:652px;top:551.3px" width="6" height="9"><path d="M1 1.2L4.3 4.5L1 7.8" fill="none" stroke="#4a4a4a" stroke-width="1"/></svg>
<div class="t" style="left:337.5px;top:572.24px;font-size:12px;color:#262626;font-family:'Liberation Sans',sans-serif;">Comp<u>a</u>re With</div>
<svg style="left:652px;top:572.9px" width="6" height="9"><path d="M1 1.2L4.3 4.5L1 7.8" fill="none" stroke="#4a4a4a" stroke-width="1"/></svg>
<div class="t" style="left:337.5px;top:593.14px;font-size:12px;color:#262626;font-family:'Liberation Sans',sans-serif;">Rep<u>l</u>ace With</div>
<svg style="left:652px;top:593.8px" width="6" height="9"><path d="M1 1.2L4.3 4.5L1 7.8" fill="none" stroke="#4a4a4a" stroke-width="1"/></svg>
<div class="t" style="left:337.5px;top:614.54px;font-size:12px;color:#262626;font-family:'Liberation Sans',sans-serif;">Confi<u>g</u>ure</div>
<svg style="left:652px;top:615.2px" width="6" height="9"><path d="M1 1.2L4.3 4.5L1 7.8" fill="none" stroke="#4a4a4a" stroke-width="1"/></svg>
<div style="left:338px;top:632px;width:326px;height:1px;background:#d7d7d7"></div>
<div class="t" style="left:337.5px;top:641.14px;font-size:12px;color:#262626;font-family:'Liberation Sans',sans-serif;">P<u>r</u>operties</div>
<div style="left:338px;top:659px;width:326px;height:1px;background:#d7d7d7"></div>
<div class="t" style="left:337.5px;top:666.14px;font-size:12px;color:#808080;font-family:'Liberation Sans',sans-serif;">Remove from Context</div>
<div class="t" style="left:531px;top:666.14px;font-size:12px;color:#6d6d6d;font-family:'Liberation Sans',sans-serif;letter-spacing:0.45px">Ctrl+Alt+Shift+Down</div>
<div style="left:104px;top:199px;width:206px;height:370px;background:#f0f0f0;border:1px solid #a0a0a0;border-top-color:#d2d2d2;border-left-color:#d2d2d2;box-sizing:border-box;box-shadow:1px 1px 1px rgba(0,0,0,0.3)"></div>
<div style="left:105px;top:200.5px;width:203px;height:18.5px;background:#91c9f7"></div>
<div class="t" style="left:133.5px;top:204.64px;font-size:12px;color:#262626;font-family:'Liberation Sans',sans-serif;"><u>C</u>ommit...</div>
<div class="t" style="left:133.5px;top:223.34px;font-size:12px;color:#808080;font-family:'Liberation Sans',sans-serif;"><u>P</u>ush to Upstream</div>
<div class="t" style="left:133.5px;top:241.84px;font-size:12px;color:#808080;font-family:'Liberation Sans',sans-serif;">Fetch <u>f</u>rom Upstream</div>
<div class="t" style="left:133.5px;top:259.84px;font-size:12px;color:#808080;font-family:'Liberation Sans',sans-serif;">P<u>u</u>ll</div>
<div style="left:129px;top:278px;width:179px;height:1px;background:#d7d7d7"></div>
<div class="t" style="left:133.5px;top:284.54px;font-size:12px;color:#262626;font-family:'Liberation Sans',sans-serif;">S<u>w</u>itch To</div>
<svg style="left:296px;top:285.2px" width="6" height="9"><path d="M1 1.2L4.3 4.5L1 7.8" fill="none" stroke="#4a4a4a" stroke-width="1"/></svg>
<div class="t" style="left:133.5px;top:305.04px;font-size:12px;color:#262626;font-family:'Liberation Sans',sans-serif;">Ad<u>v</u>anced</div>
<svg style="left:296px;top:305.7px" width="6" height="9"><path d="M1 1.2L4.3 4.5L1 7.8" fill="none" stroke="#4a4a4a" stroke-width="1"/></svg>
<div style="left:129px;top:324px;width:179px;height:1px;background:#d7d7d7"></div>
<div class="t" style="left:133.5px;top:329.84px;font-size:12px;color:#262626;font-family:'Liberation Sans',sans-serif;">Synchronize <u>W</u>orkspace</div>
<div style="left:129px;top:347px;width:179px;height:1px;background:#d7d7d7"></div>
<div class="t" style="left:133.5px;top:353.14px;font-size:12px;color:#808080;font-family:'Liberation Sans',sans-serif;"><u>M</u>erge Tool</div>
<div class="t" style="left:133.5px;top:371.84px;font-size:12px;color:#262626;font-family:'Liberation Sans',sans-serif;"><u>M</u>erge...</div>
<div style="left:129px;top:389px;width:179px;height:1px;background:#d7d7d7"></div>
<div class="t" style="left:133.5px;top:395.44px;font-size:12px;color:#808080;font-family:'Liberation Sans',sans-serif;"><u>R</u>eset...</div>
<div style="left:129px;top:412px;width:179px;height:1px;background:#d7d7d7"></div>
<div class="t" style="left:133.5px;top:420.84px;font-size:12px;color:#262626;font-family:'Liberation Sans',sans-serif;">Crea<u>t</u>e Patch...</div>
<div class="t" style="left:133.5px;top:441.84px;font-size:12px;color:#262626;font-family:'Liberation Sans',sans-serif;">Appl<u>y</u> Patch...</div>
<div style="left:129px;top:461px;width:179px;height:1px;background:#d7d7d7"></div>
<div class="t" style="left:133.5px;top:467.44px;font-size:12px;color:#262626;font-family:'Liberation Sans',sans-serif;"><u>A</u>dd to Index</div>
<div class="t" style="left:133.5px;top:486.04px;font-size:12px;color:#262626;font-family:'Liberation Sans',sans-serif;"><u>I</u>gnore</div>
<div style="left:129px;top:503px;width:179px;height:1px;background:#d7d7d7"></div>
<div class="t" style="left:133.5px;top:509.84px;font-size:12px;color:#262626;font-family:'Liberation Sans',sans-serif;">Show in Hist<u>o</u>ry</div>
<div class="t" style="left:133.5px;top:528.34px;font-size:12px;color:#262626;font-family:'Liberation Sans',sans-serif;">Show in Repositories <u>V</u>iew</div>
<div style="left:129px;top:545px;width:179px;height:1px;background:#d7d7d7"></div>
<div class="t" style="left:133.5px;top:552.24px;font-size:12px;color:#808080;font-family:'Liberation Sans',sans-serif;"><u>D</u>isconnect</div>
<div style="left:215px;top:224px;width:62px;height:21px;background:#fff;border:1px solid #808080;box-sizing:border-box;box-shadow:2px 2px 2px rgba(0,0,0,0.25)"></div>
<div class="t" style="left:219.5px;top:228.72px;font-size:12.5px;color:#5a5a5a;font-family:'Liberation Sans',sans-serif;">Commit...</div>
<svg style="left:112px;top:205px" width="12" height="10" viewBox="0 0 12 10"><rect x="3" y="0.5" width="8.5" height="9" fill="#f5c842" stroke="#d89a20" stroke-width="0.8"/><path d="M0.5 5H6M3.5 2.5L6.5 5L3.5 7.5" stroke="#b02a6a" stroke-width="1.8" fill="none"/></svg>
<svg style="left:113px;top:223px" width="11" height="11" viewBox="0 0 11 11"><circle cx="5.5" cy="3" r="2.5" fill="#d2d2d2"/><circle cx="3" cy="5.5" r="2.5" fill="#d2d2d2"/><circle cx="8" cy="5.5" r="2.5" fill="#d2d2d2"/><path d="M5.5 5V10.5" stroke="#d2d2d2" stroke-width="1.8"/></svg>
<svg style="left:113px;top:242px" width="11" height="11" viewBox="0 0 11 11"><circle cx="5.5" cy="3" r="2.5" fill="#d2d2d2"/><circle cx="3" cy="5.5" r="2.5" fill="#d2d2d2"/><circle cx="8" cy="5.5" r="2.5" fill="#d2d2d2"/><path d="M5.5 5V10.5" stroke="#d2d2d2" stroke-width="1.8"/></svg>
<svg style="left:113px;top:261px" width="11" height="11" viewBox="0 0 11 11"><circle cx="5.5" cy="3" r="2.5" fill="#d2d2d2"/><circle cx="3" cy="5.5" r="2.5" fill="#d2d2d2"/><circle cx="8" cy="5.5" r="2.5" fill="#d2d2d2"/><path d="M5.5 5V10.5" stroke="#d2d2d2" stroke-width="1.8"/></svg>
<svg style="left:113px;top:284px" width="12" height="11" viewBox="0 0 12 11"><circle cx="6" cy="2.5" r="2" fill="none" stroke="#5aa0a8" stroke-width="1.3"/><circle cx="2.5" cy="7.5" r="2" fill="none" stroke="#5aa0a8" stroke-width="1.3"/><circle cx="9.5" cy="7.5" r="2" fill="none" stroke="#6a90c0" stroke-width="1.3"/><path d="M5 4L3.5 6M7 4L8.5 6" stroke="#5aa0a8"/></svg>
<svg style="left:112px;top:328px" width="13" height="13" viewBox="0 0 13 13"><path d="M6.5 0.5L12 6L6.5 11.5L1 6z" fill="#f5a020"/><path d="M6.5 3L9.5 6L6.5 9L3.5 6z" fill="#f8e080"/><circle cx="3.5" cy="9" r="2.3" fill="#d83030"/><circle cx="9.5" cy="9" r="2.3" fill="#40a040"/></svg>
<svg style="left:113px;top:353px" width="11" height="11" viewBox="0 0 11 11"><rect x="0.5" y="0.5" width="4" height="3" fill="none" stroke="#ccc"/><rect x="6.5" y="0.5" width="4" height="3" fill="none" stroke="#ccc"/><path d="M2.5 3.5V10.5M8.5 3.5V10.5M2.5 7H8.5" stroke="#d0d0d0"/></svg>
<svg style="left:113px;top:372px" width="10" height="10" viewBox="0 0 10 10"><path d="M1 1L5 4L9 1M5 4V9" stroke="#e0a020" stroke-width="1.6" fill="none"/><circle cx="5" cy="6" r="2.3" fill="#f0c850"/></svg>
<svg style="left:114px;top:394px" width="11" height="11" viewBox="0 0 11 11"><path d="M1 9L9 2M6 1.5H9.5V5" stroke="#d0d0d0" stroke-width="1.4" fill="none"/></svg>
<svg style="left:114px;top:468px" width="9" height="9" viewBox="0 0 9 9"><path d="M3 0H6V3H9V6H6V9H3V6H0V3H3z" fill="#5aa84a"/></svg>
<svg style="left:113px;top:485px" width="11" height="11" viewBox="0 0 11 11"><path d="M3.5 0.5H8L10.5 3V10.5H3.5z" fill="#fff" stroke="#8aa0c8"/><path d="M0.5 3L5 7.5M5 3L0.5 7.5" stroke="#222" stroke-width="1.5"/></svg>
<svg style="left:114px;top:508px" width="11" height="12" viewBox="0 0 11 12"><rect x="0.5" y="3.5" width="7" height="8" fill="#fff" stroke="#6a7ab8"/><path d="M2 6H6M2 8H6" stroke="#6a7ab8"/><path d="M4 0.5H10.5V8" fill="none" stroke="#f0c020" stroke-width="1.5"/></svg>
<svg style="left:112px;top:528px" width="13" height="12" viewBox="0 0 13 12"><rect x="0.5" y="0.5" width="11" height="7" fill="#f5cc40" stroke="#d8a020"/><rect x="0.5" y="7" width="12" height="4.5" fill="#e8eef8" stroke="#6a8ac0" stroke-width="0.8"/><text x="1.5" y="11" font-size="4.5" font-family="Liberation Sans" fill="#3050a0">GIT</text></svg>
<svg style="left:113px;top:553px" width="11" height="10" viewBox="0 0 11 10"><path d="M1 9V1L6 9V1M8 1V5M6.5 3H9.5" stroke="#cfcfcf" stroke-width="1.1" fill="none"/></svg>
<svg style="left:318px;top:184px" width="11" height="12" viewBox="0 0 11 12"><rect x="0.5" y="0.5" width="6.5" height="8" fill="#f2f2f2" stroke="#98a8c0"/><rect x="3.5" y="3.5" width="6.5" height="8" fill="#e8eef6" stroke="#98a8c0"/><path d="M5 6H8.5M5 8H8.5" stroke="#98a8c0"/></svg>
<svg style="left:318px;top:203px" width="11" height="12" viewBox="0 0 11 12"><rect x="0.5" y="1.5" width="9" height="10" fill="#eaeaea" stroke="#d0d0d0"/><rect x="3" y="0.5" width="4" height="2" fill="#ddd"/></svg>
<svg style="left:319px;top:223px" width="10" height="10" viewBox="0 0 10 10"><path d="M1.5 1.5L8.5 8.5M8.5 1.5L1.5 8.5" stroke="#d9404a" stroke-width="2.6"/></svg>
<svg style="left:318px;top:290px" width="12" height="10" viewBox="0 0 12 10"><path d="M0.5 9.5V3.5L3 1.5L5 3.5H11.5V9.5z" fill="#dfe8f4" stroke="#7a90b8" stroke-width="0.9"/><path d="M3 6L5 4L7 6L9 4" stroke="#4a70b0" fill="none"/></svg>
<svg style="left:318px;top:308px" width="12" height="10" viewBox="0 0 12 10"><path d="M0.5 9.5V3.5L3 1.5L5 3.5H11.5V9.5z" fill="#dfe8f4" stroke="#7a90b8" stroke-width="0.9"/><path d="M3 7L5 5L7 7" stroke="#4a70b0" fill="none"/></svg>
<svg style="left:319px;top:352px" width="11" height="12" viewBox="0 0 11 12"><rect x="3.5" y="1.5" width="7" height="9.5" fill="#fff" stroke="#b8b8b8"/><path d="M4 4Q0 5 2 9M1 7L2 9.5L4.5 8.5" stroke="#e8b830" stroke-width="1.6" fill="none"/></svg>
<svg style="left:318px;top:665px" width="11" height="11" viewBox="0 0 11 11"><circle cx="4" cy="3" r="2" fill="#d8d8d8"/><path d="M1 10L4 6L7 10M6 5H10" stroke="#d0d0d0" stroke-width="1.2" fill="none"/></svg>
<svg style="left:1034px;top:689px" width="2" height="16" viewBox="0 0 2 16"><rect x="0.3" y="1" width="1.4" height="1.4" fill="#a8aec4"/><rect x="0.3" y="4.3" width="1.4" height="1.4" fill="#a8aec4"/><rect x="0.3" y="7.6" width="1.4" height="1.4" fill="#a8aec4"/><rect x="0.3" y="10.9" width="1.4" height="1.4" fill="#a8aec4"/><rect x="0.3" y="14.2" width="1.4" height="1.4" fill="#a8aec4"/></svg>
</body></html>
